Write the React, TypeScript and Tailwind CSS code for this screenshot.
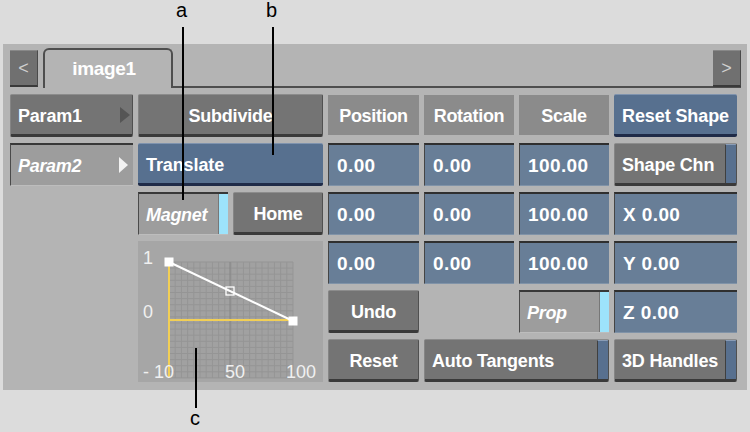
import React from 'react';

const font = "font-['Liberation_Sans',Arial,sans-serif]";

const Gray: React.FC<{ children?: React.ReactNode; className?: string; center?: boolean; strip?: boolean }> = ({ children, className = '', center, strip }) => (
  <div
    className={`flex items-stretch rounded-[2px] bg-[#747474] border-t border-t-[#8c8c8c] border-l border-l-[#858585] border-r border-r-[#505050] border-b-[3px] border-b-[#3a3a3a] overflow-hidden ${className}`}
  >
    <div className={`flex-1 flex items-center pt-[3px] text-white font-bold text-[18px] tracking-[-0.2px] ${center ? 'justify-center' : 'pl-[7px]'}`}>
      {children}
    </div>
    {strip && <div className="w-[11px] bg-[#58708f] border-t border-t-[#8a9cb6] border-l border-l-[#3f3f3f]" />}
  </div>
);

const Blue: React.FC<{ children?: React.ReactNode; className?: string; center?: boolean }> = ({ children, className = '', center }) => (
  <div
    className={`flex items-center pt-[3px] rounded-[2px] bg-[#57708f] border-t border-t-[#7f93ae] border-b-[3px] border-b-[#1f2b48] text-white font-bold text-[18px] tracking-[-0.1px] ${center ? 'justify-center' : 'pl-[8px]'} ${className}`}
  >
    {children}
  </div>
);

const Field: React.FC<{ children?: React.ReactNode; className?: string }> = ({ children, className = '' }) => (
  <div
    className={`flex items-center pl-[8px] pt-[3px] bg-[#687e97] border-t-2 border-t-[#2f2f2f] border-l border-l-[#454545] border-b border-b-[#8093a8] text-white font-bold text-[19px] tracking-[0.4px] ${className}`}
  >
    {children}
  </div>
);

const Label: React.FC<{ children?: React.ReactNode }> = ({ children }) => (
  <div className="self-start mt-[1px] h-[40px] pt-[2px] flex items-center justify-center bg-[#8b8b8b] text-white font-bold text-[18px] tracking-[-0.3px]">
    {children}
  </div>
);

const Pressed: React.FC<{ children?: React.ReactNode; className?: string; blue?: boolean; tri?: boolean }> = ({ children, className = '', blue, tri }) => (
  <div
    className={`flex items-stretch bg-[#9d9d9d] border-t-2 border-t-[#383838] border-l border-l-[#4a4a4a] border-b border-b-[#bdbdbd] ${className}`}
  >
    <div className="flex-1 flex items-center pt-[2px] pl-[7px] text-white italic font-bold text-[18px] tracking-[-0.3px]">{children}</div>
    {blue && <div className="w-[10px] bg-[#9de3fb] border-l border-l-[#777]" />}
    {tri && (
      <div className="w-[14px] flex items-center">
        <svg width="9" height="16" viewBox="0 0 9 16"><polygon points="0,0 9,8 0,16" fill="#f2f2f2" /></svg>
      </div>
    )}
  </div>
);

const Graph: React.FC<{ className?: string }> = ({ className = '' }) => {
  const vx: number[] = [];
  for (let i = 0; i <= 20; i++) vx.push(31 + i * 6.2);
  const hy: number[] = [];
  for (let i = 0; i <= 19; i++) hy.push(21 + i * 6.1);
  return (
    <div className={`bg-[#a6a6a6] ${className}`}>
      <svg width="185" height="143" viewBox="0 0 185 143" className="block">
        <rect x="31" y="21" width="124" height="116" fill="#a1a1a1" />
        {vx.map((x) => (
          <line key={'v' + x} x1={x} y1="21" x2={x} y2="137" stroke="#959595" strokeWidth="1" />
        ))}
        {hy.map((y) => (
          <line key={'h' + y} x1="31" y1={y} x2="155" y2={y} stroke="#959595" strokeWidth="1" />
        ))}
        <line x1="92" y1="21" x2="92" y2="137" stroke="#848484" strokeWidth="1" />
        <line x1="31" y1="22" x2="31" y2="137" stroke="#f2cf55" strokeWidth="2" />
        <line x1="31" y1="79" x2="155" y2="79" stroke="#f2cf55" strokeWidth="2" />
        <line x1="31" y1="21" x2="155" y2="80" stroke="#ffffff" strokeWidth="2" />
        <rect x="26.5" y="16.5" width="9" height="9" fill="#ffffff" />
        <rect x="150.5" y="75.5" width="9" height="9" fill="#ffffff" />
        <rect x="88" y="46" width="8" height="8" fill="none" stroke="#ffffff" strokeWidth="1.3" />
        <g fontFamily="'Liberation Sans', Arial, sans-serif" fontSize="18" fill="#f0f0f0">
          <text x="5" y="23">1</text>
          <text x="5" y="77">0</text>
          <text x="5" y="137">- 10</text>
          <text x="87" y="137">50</text>
          <text x="148" y="137">100</text>
        </g>
      </svg>
    </div>
  );
};

export default function App() {
  return (
    <div className={`relative w-[750px] h-[432px] bg-[#dcdcdc] pt-[44px] pl-[3px] overflow-hidden ${font}`}>
      <div className="w-[744px] h-[346px] bg-[#b4b4b4] flex flex-col">
        {/* tab strip */}
        <div className="h-[44px] flex items-end pl-[7px] pr-[6px]">
          <div className="mb-[1px] w-[28px] h-[37px] flex items-center justify-center bg-[#707070] border-t border-t-[#888] border-b-2 border-b-[#3a3a3a] border-r border-r-[#4a4a4a] text-[#cfcfcf] text-[18px]">
            &lt;
          </div>
          <div className="ml-[5px] w-[130px] h-[40px] pr-[8px] rounded-t-[6px] border-t-2 border-x-2 border-[#4e4e4e] flex items-center justify-center text-white font-bold text-[19px] tracking-[-0.3px]">
            image1
          </div>
          <div className="flex-1 h-full border-b-2 border-b-[#4e4e4e] flex justify-end items-end">
            <div className="mb-[-1px] w-[28px] h-[37px] flex items-center justify-center bg-[#707070] border-t border-t-[#888] border-b-2 border-b-[#3a3a3a] border-r border-r-[#4a4a4a] text-[#cfcfcf] text-[18px]">
              &gt;
            </div>
          </div>
        </div>

        {/* controls */}
        <div className="mt-[6px] ml-[7px] grid grid-cols-[123px_90px_90px_91px_90px_90px_123px] grid-rows-[repeat(6,43px)] gap-x-[5px] gap-y-[6px]">
          <Gray className="col-start-1 row-start-1">
            <div className="flex-1 flex items-center justify-between pr-[2px]">
              <span>Param1</span>
              <svg width="10" height="16" viewBox="0 0 10 16" className="-mt-[3px]"><polygon points="0,0 10,8 0,16" fill="#555555" /></svg>
            </div>
          </Gray>
          <Gray className="col-start-2 col-span-2 row-start-1" center>Subdivide</Gray>
          <Label>Position</Label>
          <Label>Rotation</Label>
          <Label>Scale</Label>
          <Blue className="col-start-7 row-start-1" center>Reset Shape</Blue>

          <Pressed className="col-start-1 row-start-2" tri>Param2</Pressed>
          <Blue className="col-start-2 col-span-2 row-start-2">Translate</Blue>
          <Field className="col-start-4 row-start-2">0.00</Field>
          <Field className="col-start-5 row-start-2">0.00</Field>
          <Field className="col-start-6 row-start-2">100.00</Field>
          <Gray className="col-start-7 row-start-2" strip>Shape Chn</Gray>

          <Pressed className="col-start-2 row-start-3" blue>Magnet</Pressed>
          <Gray className="col-start-3 row-start-3" center>Home</Gray>
          <Field className="col-start-4 row-start-3">0.00</Field>
          <Field className="col-start-5 row-start-3">0.00</Field>
          <Field className="col-start-6 row-start-3">100.00</Field>
          <Field className="col-start-7 row-start-3">X 0.00</Field>

          <Graph className="col-start-2 col-span-2 row-start-4 row-span-3" />
          <Field className="col-start-4 row-start-4">0.00</Field>
          <Field className="col-start-5 row-start-4">0.00</Field>
          <Field className="col-start-6 row-start-4">100.00</Field>
          <Field className="col-start-7 row-start-4">Y 0.00</Field>

          <Gray className="col-start-4 row-start-5" center>Undo</Gray>
          <Pressed className="col-start-6 row-start-5" blue>Prop</Pressed>
          <Field className="col-start-7 row-start-5">Z 0.00</Field>

          <Gray className="col-start-4 row-start-6" center>Reset</Gray>
          <Gray className="col-start-5 col-span-2 row-start-6" strip>Auto Tangents</Gray>
          <Gray className="col-start-7 row-start-6" strip>3D Handles</Gray>
        </div>
      </div>

      {/* callouts */}
      <div className="absolute left-[176px] top-[0px] text-[20px] text-black leading-none">a</div>
      <div className="absolute left-[182px] top-[27px] w-[2px] h-[173px] bg-black" />
      <div className="absolute left-[266px] top-[0px] text-[20px] text-black leading-none">b</div>
      <div className="absolute left-[272px] top-[27px] w-[2px] h-[128px] bg-black" />
      <div className="absolute left-[195px] top-[348px] w-[2px] h-[60px] bg-black" />
      <div className="absolute left-[190px] top-[408px] text-[20px] text-black leading-none">c</div>
    </div>
  );
}
